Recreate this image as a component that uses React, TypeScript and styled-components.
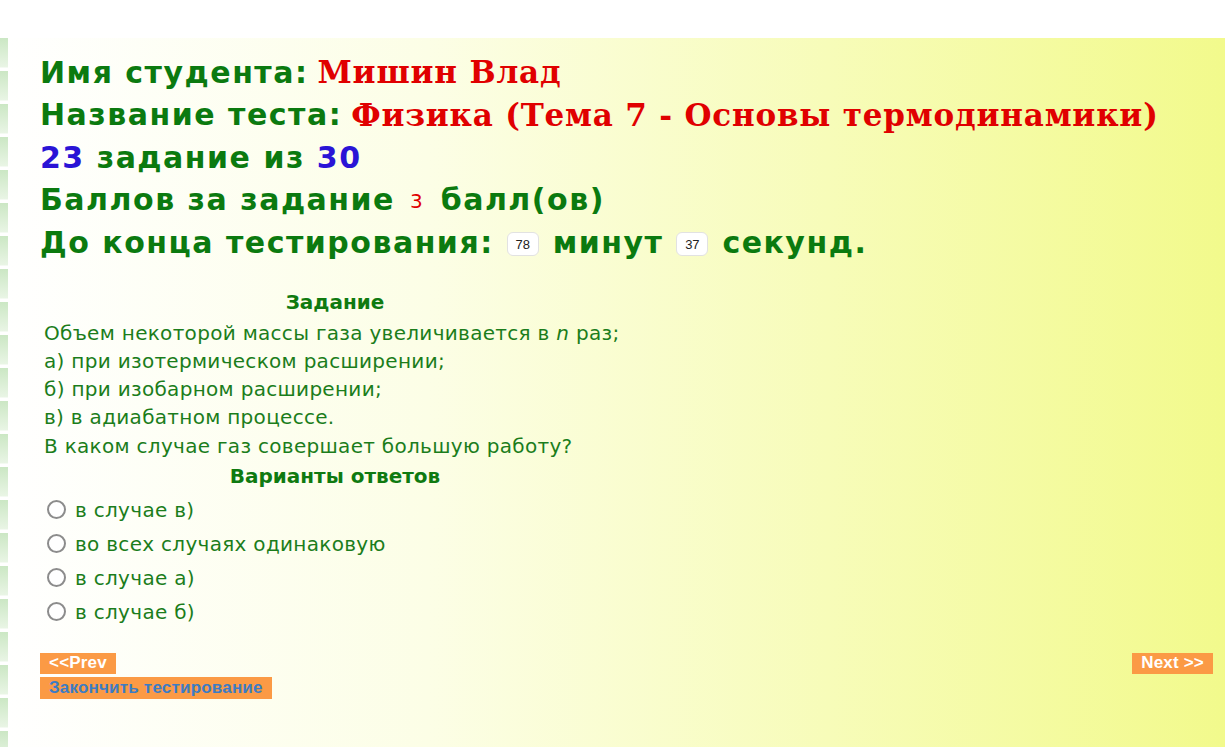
import React from 'react';
import styled, { createGlobalStyle } from 'styled-components';

const GlobalStyle = createGlobalStyle`
  html, body {
    margin: 0;
    padding: 0;
    background: #ffffff;
  }
  body {
    font-family: 'DejaVu Sans', Verdana, sans-serif;
  }
`;

const Page = styled.div`
  padding-top: 38px;
  min-height: 747px;
  box-sizing: border-box;
  display: flex;
  flex-direction: column;
`;

const Panel = styled.div`
  flex: 1;
  padding: 13px 12px 40px 40px;
  background-image:
    repeating-linear-gradient(
      to bottom,
      #cbe7c4 0px,
      #e9f5e5 29px,
      #ffffff 30px,
      #ffffff 33px
    ),
    linear-gradient(to right, #ffffff 0%, #fcfee6 35%, #f2fa8c 100%);
  background-size: 8px 100%, 100% 100%;
  background-repeat: no-repeat;
`;

const Header = styled.div`
  display: flex;
  flex-direction: column;
`;

const HeaderLine = styled.div`
  height: 42.5px;
  display: flex;
  align-items: center;
  white-space: pre;
  font-family: 'DejaVu Sans', Verdana, sans-serif;
  font-weight: bold;
  font-size: 30px;
  letter-spacing: 1.5px;
  color: #0b7a0f;
`;

const Accent = styled.span`
  margin-left: 9px;
  font-family: 'DejaVu Serif', Georgia, serif;
  font-weight: bold;
  font-size: 31px;
  letter-spacing: 0.8px;
  color: #e00000;
`;

const Count = styled.span`
  color: #2a14d6;
`;

const Points = styled.span`
  font-weight: normal;
  font-size: 20px;
  letter-spacing: 0;
  color: #e00000;
  margin: 3px 18px 0 15px;
`;

const TimeBox = styled.span`
  display: inline-flex;
  align-items: center;
  justify-content: center;
  width: 32px;
  height: 24px;
  margin: 4px 14px 0 13px;
  box-sizing: border-box;
  background: #ffffff;
  border: 1px solid #e2e2e2;
  border-radius: 6px;
  font-family: 'Liberation Sans', Arial, sans-serif;
  font-weight: normal;
  font-size: 13px;
  letter-spacing: 0;
  color: #222;
`;

const Task = styled.div`
  width: 582px;
  margin: 22px 0 0 4px;
  color: #1b7d1b;
`;

const SectionTitle = styled.div`
  text-align: center;
  font-weight: bold;
  font-size: 20px;
  line-height: 33px;
  color: #0f7a10;
`;

const Question = styled.div`
  font-size: 20px;
  letter-spacing: 0.3px;
  line-height: 28.25px;
  white-space: nowrap;
`;

const Options = styled.div`
  display: flex;
  flex-direction: column;
`;

const Option = styled.label`
  display: flex;
  align-items: center;
  gap: 9px;
  height: 34px;
  font-size: 20px;
  letter-spacing: 0.3px;
  white-space: nowrap;
`;

const Radio = styled.input`
  appearance: none;
  margin: 0 0 0 3px;
  width: 19px;
  height: 19px;
  box-sizing: border-box;
  border: 2px solid #8c8c8c;
  border-radius: 50%;
  background: #ffffff;
`;

const Footer = styled.div`
  display: flex;
  justify-content: space-between;
  align-items: flex-start;
  margin-top: 24px;
`;

const ButtonColumn = styled.div`
  display: flex;
  flex-direction: column;
  align-items: flex-start;
  gap: 3px;
`;

const NavButton = styled.button<{ $finish?: boolean }>`
  border: none;
  margin: 0;
  padding: 0 9px;
  height: ${(p) => (p.$finish ? 22 : 21)}px;
  background: #fb9a45;
  font-family: 'Liberation Sans', Arial, sans-serif;
  font-weight: bold;
  font-size: 17px;
  letter-spacing: 0.2px;
  color: ${(p) => (p.$finish ? '#3c7cc4' : '#ffffff')};
  cursor: pointer;
`;

const options = [
  'в случае в)',
  'во всех случаях одинаковую',
  'в случае а)',
  'в случае б)',
];

export default function App() {
  return (
    <>
      <GlobalStyle />
      <Page>
        <Panel>
          <Header>
            <HeaderLine>
              Имя студента:<Accent>Мишин Влад</Accent>
            </HeaderLine>
            <HeaderLine>
              Название теста:<Accent>Физика (Тема 7 - Основы термодинамики)</Accent>
            </HeaderLine>
            <HeaderLine>
              <Count>23</Count> задание из <Count>30</Count>
            </HeaderLine>
            <HeaderLine>
              Баллов за задание<Points>3</Points>балл(ов)
            </HeaderLine>
            <HeaderLine>
              До конца тестирования:<TimeBox>78</TimeBox>минут<TimeBox>37</TimeBox>секунд.
            </HeaderLine>
          </Header>

          <Task>
            <SectionTitle>Задание</SectionTitle>
            <Question>
              Объем некоторой массы газа увеличивается в <i>n</i> раз;
              <br />
              а) при изотермическом расширении;
              <br />
              б) при изобарном расширении;
              <br />
              в) в адиабатном процессе.
              <br />
              В каком случае газ совершает большую работу?
            </Question>
            <SectionTitle>Варианты ответов</SectionTitle>
            <Options>
              {options.map((o) => (
                <Option key={o}>
                  <Radio type="radio" name="answer" />
                  {o}
                </Option>
              ))}
            </Options>
          </Task>

          <Footer>
            <ButtonColumn>
              <NavButton>&lt;&lt;Prev</NavButton>
              <NavButton $finish>Закончить тестирование</NavButton>
            </ButtonColumn>
            <NavButton>Next &gt;&gt;</NavButton>
          </Footer>
        </Panel>
      </Page>
    </>
  );
}
